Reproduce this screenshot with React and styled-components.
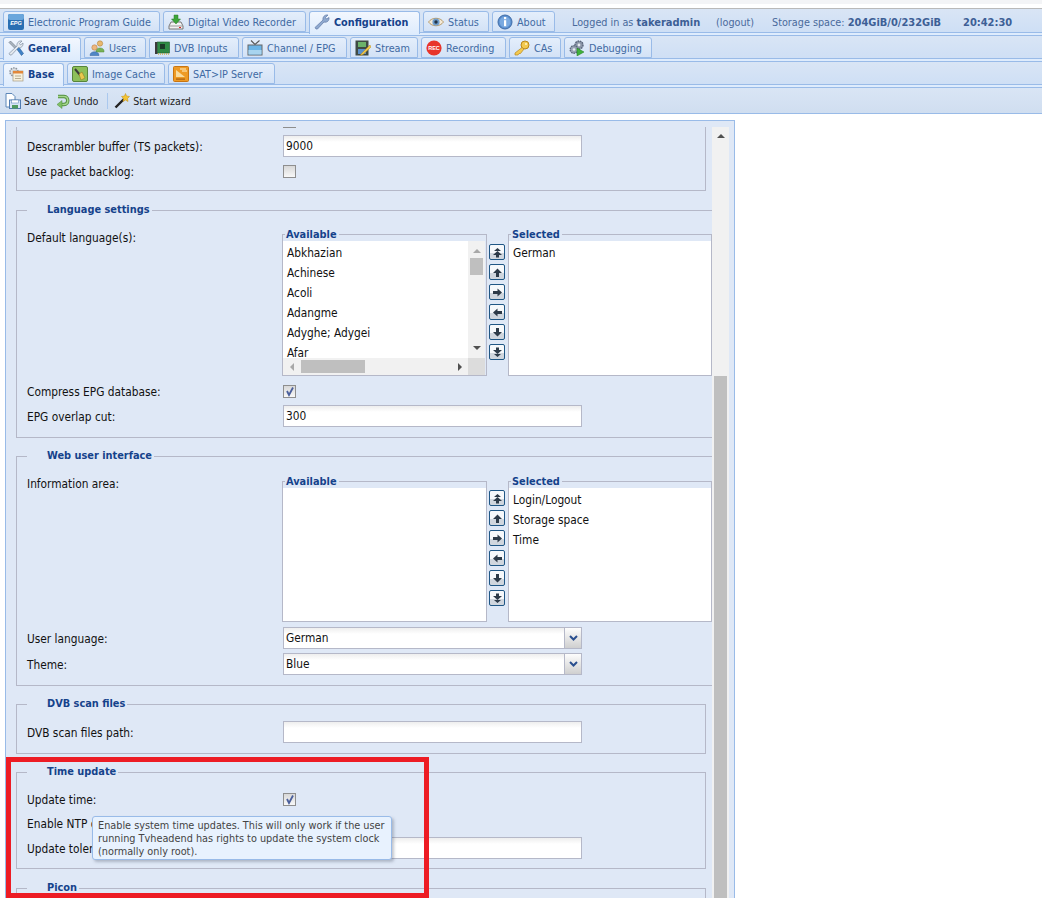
import React from 'react'
import styled, { createGlobalStyle } from 'styled-components'

const GlobalStyle = createGlobalStyle`
  html, body {
    margin: 0;
    padding: 0;
    background: #fff;
    height: 100%;
    overflow: hidden;
  }
  body {
    font-family: "DejaVu Sans Condensed", "DejaVu Sans", sans-serif;
    font-size: 12px;
    color: #111;
  }
`

const Page = styled.div`
  height: 898px;
  overflow: hidden;
  position: relative;
`

const BrowserEdge = styled.div`
  height: 8px;
  background: linear-gradient(#f3f4f6 0 4px, #fff 4px);
  border-bottom: 1px solid #b9b9b9;
`

// tab strips
const Strip = styled.div`
  height: 26px;
  box-sizing: border-box;
  background: linear-gradient(#d9e5f5, #cedff5 23px, #deecfd 0);
  border-top: ${({ $first }) => ($first ? 0 : 1)}px solid #99bbe8;
  display: flex;
  align-items: flex-start;
  padding: ${({ $first }) => ($first ? 2 : 1)}px 0 0 3px;
  gap: 3px;
  position: relative;

  &::after {
    content: '';
    position: absolute;
    left: 0;
    right: 0;
    bottom: 2px;
    height: 1px;
    background: #99bbe8;
  }
`

const Tab = styled.div`
  width: ${({ $w }) => $w}px;
  height: ${({ $active }) => ($active ? 23 : 21)}px;
  box-sizing: border-box;
  border: 1px solid #99bbe8;
  border-bottom: ${({ $active }) => ($active ? 0 : 1)}px solid #99bbe8;
  border-radius: 3px 3px 0 0;
  background: ${({ $active }) =>
    $active ? 'linear-gradient(#f2f7fe, #deecfd)' : 'linear-gradient(#e4eefb, #d3e2f6)'};
  color: ${({ $active }) => ($active ? '#15428b' : '#416aa3')};
  font-size: 10.75px;
  font-weight: ${({ $active }) => ($active ? 700 : 400)};
  display: flex;
  align-items: center;
  gap: 4px;
  padding: ${({ $active }) => ($active ? '0 0 2px 4px' : '1px 0 0 4px')};
  white-space: nowrap;
  position: relative;
  z-index: 1;
`

const Info = styled.div`
  display: flex;
  align-items: center;
  height: 21px;
  padding-top: 1px;
  box-sizing: border-box;
  margin-left: 14px;
  color: #4a6a9c;
  font-size: 10.75px;
  white-space: nowrap;
  position: relative;

  b {
    color: #3d5f96;
    font-size: 11px;
  }
`

const InfoItem = styled.span`
  width: ${({ $w }) => $w}px;
`

const Toolbar = styled.div`
  height: 27px;
  box-sizing: border-box;
  background: linear-gradient(#d9e5f5, #d0def0);
  border-top: 1px solid #99bbe8;
  border-bottom: 1px solid #99bbe8;
  display: flex;
  align-items: center;
  padding-left: 5px;
  font-size: 10.6px;
  color: #222;
`

const ToolButton = styled.span`
  display: flex;
  align-items: center;
  gap: ${({ $gap }) => $gap}px;
  margin-right: ${({ $after }) => $after}px;
`

const ToolSep = styled.span`
  width: 1px;
  height: 16px;
  background: #aac8ee;
  margin-right: 6px;
`

// settings panel
const Panel = styled.div`
  margin: 6px 0 0 5px;
  width: 730px;
  height: 790px;
  box-sizing: border-box;
  border: 1px solid #99bbe8;
  background: #dfe8f6;
  padding-top: 6px;
  display: flex;
`

const Viewport = styled.div`
  width: 706px;
  height: 780px;
  overflow: hidden;
  padding-left: 10px;
  box-sizing: border-box;
`

const Track = styled.div`
  width: 17px;
  height: 780px;
  background: #f1f1f1;
  display: flex;
  flex-direction: column;
  align-items: center;
  padding-top: 6px;
  box-sizing: border-box;
`

const TrackGap = styled.div`
  height: 237px;
  flex: none;
`

const TrackThumb = styled.div`
  width: 13px;
  flex: 1;
  background: #bfbfbf;
`

const Group = styled.fieldset`
  margin: 0 0 ${({ $gap = 11 }) => $gap}px;
  width: ${({ $wide }) => ($wide ? 730 : 690)}px;
  box-sizing: border-box;
  border: 1px solid #b5b8c8;
  border-top: ${({ $cut }) => ($cut ? 'none' : '1px solid #b5b8c8')};
  padding: ${({ $cut }) => ($cut ? 0 : 10)}px 0 ${({ $end = 6 }) => $end}px 10px;
  min-width: 0;
`

const GroupTitle = styled.legend`
  margin-left: 0;
  padding: 0 2px 0 20px;
  font-size: 10.9px;
  line-height: 14px;
  font-weight: 700;
  color: #15428b;
`

const Row = styled.div`
  display: flex;
  align-items: ${({ $top }) => ($top ? 'flex-start' : 'center')};
  min-height: ${({ $h = 22 }) => $h}px;
  margin-bottom: ${({ $after = 4 }) => $after}px;
  margin-top: ${({ $pull }) => ($pull ? `-${$pull}px` : 0)};
`

const Label = styled.label`
  width: 256px;
  flex: none;
  white-space: nowrap;
  font-size: 11.8px;
  padding-top: ${({ $top }) => ($top ? 4 : 1)}px;
`

const Input = styled.div`
  width: 299px;
  height: 22px;
  box-sizing: border-box;
  border: 1px solid #b5b8c8;
  background: linear-gradient(#eeeeee, #fff 6px);
  padding-left: 2px;
  line-height: 21px;
  font-size: 11.8px;
`

const Combo = styled(Input)`
  display: flex;
  justify-content: space-between;
`

const ComboTrigger = styled.span`
  width: 16px;
  height: 20px;
  border-left: 1px solid #b5b8c8;
  background: linear-gradient(#fdfdfd, #e6e6e6 50%, #cfcfcf);
  display: flex;
  align-items: center;
  justify-content: center;
`

const Check = styled.span`
  width: 13px;
  height: 13px;
  box-sizing: border-box;
  border: 1px solid #8e8e8e;
  background: linear-gradient(#d8d8d8, #f8f8f8);
  display: flex;
  align-items: center;
  justify-content: center;
`

const Multi = styled.div`
  display: flex;
  align-items: flex-start;
  margin-top: ${({ $nudge = 0 }) => $nudge}px;
  margin-bottom: ${({ $after = 0 }) => $after}px;
  margin-left: -1px;
`

const ListBox = styled.fieldset`
  margin: 0;
  padding: 0;
  width: ${({ $w }) => $w}px;
  height: ${({ $h }) => $h}px;
  box-sizing: border-box;
  border: 1px solid #b5b8c8;
  min-width: 0;
  position: relative;
`

const ListTitle = styled.legend`
  margin-left: 2px;
  padding: 0 2px 0 1px;
  font-size: 10.9px;
  line-height: 14px;
  font-weight: 700;
  color: #15428b;
  position: relative;
  top: 1px;
`

const ListBody = styled.div`
  background: #fff;
  height: ${({ $h }) => $h - 15}px;
  box-sizing: border-box;
  padding-top: 2px;
  margin-right: ${({ $scroll }) => ($scroll ? 1 : 0)}px;
  overflow: hidden;
  position: relative;
`

const ListItem = styled.div`
  height: 20px;
  line-height: 20px;
  padding-left: 4px;
  font-size: 11.8px;
  white-space: nowrap;
`

const VBar = styled.div`
  position: absolute;
  top: 0;
  right: 0;
  width: 17px;
  bottom: 17px;
  background: #f1f1f1;
  display: flex;
  flex-direction: column;
  align-items: center;
  justify-content: space-between;
  padding: 7px 0;
  box-sizing: border-box;
`

const VThumb = styled.span`
  position: absolute;
  left: 2px;
  top: 17px;
  width: 13px;
  height: 17px;
  background: #bfbfbf;
`

const HBar = styled.div`
  position: absolute;
  left: 0;
  right: 0;
  bottom: 0;
  height: 17px;
  background: #f1f1f1;
  display: flex;
  align-items: center;
  justify-content: space-between;
  padding: 0 22px 0 6px;
`

const HThumb = styled.span`
  position: absolute;
  left: 18px;
  top: 2px;
  width: 64px;
  height: 13px;
  background: #bfbfbf;
`

const Corner = styled.span`
  position: absolute;
  right: 0;
  bottom: 0;
  width: 17px;
  height: 17px;
  background: #dcdcdc;
`

const MoveColumn = styled.div`
  width: 16px;
  margin: ${({ $top }) => $top}px 3px 0 2px;
  display: flex;
  flex-direction: column;
  gap: 4px;
`

const MoveButton = styled.span`
  width: 16px;
  height: 16px;
  box-sizing: border-box;
  border: 1px solid #1f5685;
  border-radius: 2px;
  background: linear-gradient(#f6f8fb 55%, #d0d6de 55%);
  display: flex;
  align-items: center;
  justify-content: center;
`

const Tooltip = styled.div`
  position: absolute;
  left: 92px;
  top: 816px;
  width: 300px;
  height: 44px;
  box-sizing: border-box;
  padding: 2px 5px;
  border: 1px solid #99bbe8;
  border-radius: 3px;
  background: #e8f2fe;
  box-shadow: 2px 2px 3px rgba(80, 90, 110, 0.35);
  color: #444;
  font-size: 10.8px;
  line-height: 13px;
  white-space: nowrap;
  z-index: 3;
`

const Highlight = styled.div`
  position: absolute;
  left: 6px;
  top: 757px;
  width: 423px;
  height: 141px;
  box-sizing: border-box;
  border: 5px solid #ed1c24;
  z-index: 4;
`

// small icons, all 16x16
const Svg = ({ children, w = 16, h = 16 }) => (
  <svg width={w} height={h} viewBox={`0 0 ${w} ${h}`} style={{ flex: 'none' }}>
    {children}
  </svg>
)

const icons = {
  epg: (
    <Svg>
      <rect x="0" y="0" width="16" height="16" rx="2" fill="#2a6fb2" />
      <rect x="0" y="0" width="16" height="6" rx="2" fill="#6aa6dc" />
      <text x="8" y="10.5" fontSize="5.5" fontWeight="700" fontStyle="italic" fill="#fff" textAnchor="middle" fontFamily="Liberation Sans, sans-serif">EPG</text>
    </Svg>
  ),
  dvr: (
    <Svg>
      <path d="M3 8 L1 12 V15 H15 V12 L13 8 Z" fill="#f2f2f2" stroke="#777" />
      <path d="M1 12 H15" stroke="#999" />
      <rect x="11" y="13" width="2" height="1" fill="#d22" />
      <path d="M6 1 H10 V5 H12.5 L8 10 L3.5 5 H6 Z" fill="#3da53a" stroke="#2a7a28" strokeWidth="0.5" />
    </Svg>
  ),
  wrench: (
    <Svg>
      <path d="M2 15 L1 13.5 L9 6 C8.5 3 10.5 0.5 14 1 L11.5 3.5 L12.5 5 L15 3.5 C15.5 6.5 13 9 10 8 L3.5 15 Z" fill="#8fa9cf" stroke="#6079a6" strokeWidth="0.7" />
    </Svg>
  ),
  eye: (
    <Svg>
      <path d="M0.5 8 C4 3 12 3 15.5 8 C12 13 4 13 0.5 8 Z" fill="#f4ead8" stroke="#b59b6d" />
      <circle cx="8" cy="8" r="3.6" fill="#6c9ccc" />
      <circle cx="8" cy="8" r="1.7" fill="#234" />
    </Svg>
  ),
  info: (
    <Svg>
      <circle cx="8" cy="8" r="7" fill="#5c90cf" stroke="#3e6ba8" />
      <circle cx="8" cy="8" r="5.4" fill="#7aa9e0" />
      <rect x="7" y="3" width="2.2" height="2.2" fill="#fff" />
      <rect x="7" y="6.2" width="2.2" height="6" fill="#fff" />
    </Svg>
  ),
  tools: (
    <Svg>
      <path d="M1 2.5 L2.5 1 L9 7.5 L7.5 9 Z" fill="#aab4bf" stroke="#67727f" strokeWidth="0.6" />
      <path d="M8 8 L10 6 L15.5 13.5 L13.5 15.5 Z" fill="#3f82c8" stroke="#2a5f99" strokeWidth="0.6" />
      <path d="M2 15 L1 13.5 L9 6 C8.5 3 10.5 0.5 14 1 L11.5 3.5 L12.5 5 L15 3 C15.5 6 13 8.5 10.5 7.5 L3.5 15 Z" fill="#e3e8ee" stroke="#6f7f94" strokeWidth="0.6" />
    </Svg>
  ),
  users: (
    <Svg>
      <circle cx="11" cy="3.5" r="2.7" fill="#e9b86f" stroke="#a87a30" strokeWidth="0.5" />
      <path d="M7 11 C7 7 15 7 15 11 V12 H7 Z" fill="#79b257" stroke="#4d8a36" strokeWidth="0.5" />
      <circle cx="5.5" cy="7.5" r="2.7" fill="#edb77e" stroke="#b0763a" strokeWidth="0.5" />
      <path d="M1 15.5 C1 10.5 10 10.5 10 15.5 Z" fill="#4f86c6" stroke="#33639c" strokeWidth="0.5" />
    </Svg>
  ),
  card: (
    <Svg>
      <rect x="1" y="2" width="2.5" height="12" fill="#3b3b3b" />
      <rect x="3.5" y="2" width="12" height="11" fill="#2f8a45" stroke="#1c5a2c" strokeWidth="0.6" />
      <rect x="6" y="4" width="5" height="5" fill="#1c3a28" />
      <path d="M4 14 H15" stroke="#c8b050" strokeWidth="1.5" strokeDasharray="1 1" />
    </Svg>
  ),
  tv: (
    <Svg>
      <path d="M4 0.5 L8 4.5 L12.5 0.5" fill="none" stroke="#555" strokeWidth="1.1" />
      <rect x="0.5" y="4.5" width="15" height="11" fill="#666" />
      <rect x="1.5" y="5.5" width="13" height="9" fill="#6bb4e6" />
      <rect x="1.5" y="10" width="13" height="4.5" fill="#a8d4ef" />
    </Svg>
  ),
  stream: (
    <Svg>
      <rect x="0.5" y="0.5" width="13" height="15" fill="#3f4a44" />
      <rect x="3" y="2" width="8" height="5" fill="#6bb26a" />
      <rect x="3" y="9" width="8" height="5" fill="#5a8fc9" />
      <path d="M15 5 L7 13 L5 15.5 L8 14.5 L16 7 Z" fill="#f2c84a" stroke="#b68a20" strokeWidth="0.5" />
    </Svg>
  ),
  rec: (
    <Svg>
      <circle cx="8" cy="8" r="7.6" fill="#e8352b" />
      <text x="8" y="10" fontSize="5.5" fontWeight="700" fill="#fff" textAnchor="middle" fontFamily="Liberation Sans, sans-serif">REC</text>
    </Svg>
  ),
  key: (
    <Svg>
      <circle cx="11" cy="5" r="4" fill="#f3c94f" stroke="#b8871e" />
      <path d="M8 7.5 L1 13 V15 H4 L5 13.5 H6.5 L10 9 Z" fill="#f3c94f" stroke="#b8871e" strokeWidth="0.7" />
      <circle cx="12" cy="4" r="1" fill="#fff5c4" />
    </Svg>
  ),
  gears: (
    <Svg>
      <circle cx="10" cy="5" r="4" fill="#8b96a8" stroke="#59657a" strokeDasharray="1.6 0.8" strokeWidth="1.4" />
      <circle cx="10" cy="5" r="1.4" fill="#e8ecf2" />
      <circle cx="5" cy="9.5" r="3.8" fill="#9aa5b6" stroke="#5d697e" strokeDasharray="1.6 0.8" strokeWidth="1.4" />
      <circle cx="5" cy="9.5" r="1.3" fill="#e8ecf2" />
      <path d="M8 8 L15 12 L8 16 Z" fill="#3fb13a" stroke="#237a20" strokeWidth="0.5" />
    </Svg>
  ),
  base: (
    <Svg>
      <circle cx="6" cy="6" r="4" fill="#dfe2e6" stroke="#8a929c" strokeDasharray="1.5 1" strokeWidth="1.6" />
      <rect x="5" y="5" width="10" height="10" fill="#f7f0dc" stroke="#a59a80" strokeWidth="0.7" />
      <rect x="5" y="5" width="10" height="2.5" fill="#e2873a" />
      <path d="M7 10 H13 M7 12.5 H13" stroke="#b8ad92" />
    </Svg>
  ),
  broom: (
    <Svg>
      <rect x="0.5" y="0.5" width="15" height="15" rx="1.5" fill="#8dbf5a" stroke="#56853a" />
      <path d="M3 3 L8 9" stroke="#3c3c3c" strokeWidth="2" />
      <path d="M7 8 L10 6 L13 12 L9 14 Z" fill="#e8c84e" stroke="#8a6f1c" strokeWidth="0.5" />
    </Svg>
  ),
  dish: (
    <Svg>
      <rect x="0.5" y="0.5" width="15" height="15" rx="1" fill="#ee9a25" stroke="#c87512" />
      <path d="M3 4 L12 11 L3 11 Z" fill="#f8dca0" />
      <path d="M7 3 L13 3 M9 5 L14 5" stroke="#fff0c8" />
      <rect x="3" y="12.5" width="9" height="1.2" fill="#a85f10" />
    </Svg>
  ),
  save: (
    <Svg>
      <path d="M1 0.5 H7 L10 3.5 V14 H1 Z" fill="#fff" stroke="#5d87b8" />
      <rect x="4.5" y="7" width="11" height="8.5" fill="#d5e4f5" stroke="#4f7bb0" />
      <rect x="6.5" y="7" width="7" height="3" fill="#fff" stroke="#4f7bb0" strokeWidth="0.5" />
      <rect x="7" y="12" width="6" height="3.5" fill="#4f9a5e" />
    </Svg>
  ),
  undo: (
    <Svg w={14} h={16}>
      <path d="M2 3.5 H8 C13 3.5 13 11.5 8 11.5 H5" fill="none" stroke="#4f8c3c" strokeWidth="3.4" />
      <path d="M2 3.5 H8 C13 3.5 13 11.5 8 11.5 H5" fill="none" stroke="#a5d68b" strokeWidth="1.6" />
      <path d="M6 7.5 L1 11.5 L6 15.5 Z" fill="#7fbf64" stroke="#4f8c3c" strokeWidth="0.5" />
    </Svg>
  ),
  wand: (
    <Svg>
      <path d="M1.5 14.5 L10 6" stroke="#222" strokeWidth="2.4" />
      <path d="M11.5 0.5 L12.5 3 L15.5 3.5 L13.5 5.5 L14 8.5 L11.5 7 L9 8.5 L9.5 5.5 L7.5 3.5 L10.5 3 Z" fill="#f4c533" stroke="#c08a10" strokeWidth="0.5" />
    </Svg>
  ),
}

const Chevron = () => (
  <Svg w={9} h={7}>
    <path d="M1 1 L4.5 4.5 L8 1" fill="none" stroke="#2a4f8f" strokeWidth="2" />
  </Svg>
)

const CheckMark = () => (
  <Svg w={11} h={11}>
    <path d="M3 5 L5 9 L9 1.5" fill="none" stroke="#4a5f9c" strokeWidth="1.8" />
  </Svg>
)

const Tri = ({ dir, color = '#555' }) => {
  const d = {
    up: 'M0 5 L4 1 L8 5 Z',
    down: 'M0 1 L4 5 L8 1 Z',
    left: 'M5 0 L1 4 L5 8 Z',
    right: 'M1 0 L5 4 L1 8 Z',
  }[dir]
  const wide = dir === 'up' || dir === 'down'
  return (
    <Svg w={wide ? 8 : 6} h={wide ? 6 : 8}>
      <path d={d} fill={color} />
    </Svg>
  )
}

const moves = {
  top: 'M2 4 L5.5 1 L9 4 Z M1 8 L5.5 4 L10 8 H7 V10.5 H4 V8 Z',
  up: 'M1 6 L5.5 1.5 L10 6 H7 V10 H4 V6 Z',
  right: 'M5.5 1.5 L10 5.5 L5.5 9.5 V7 H1 V4 H5.5 Z',
  left: 'M5.5 1.5 L1 5.5 L5.5 9.5 V7 H10 V4 H5.5 Z',
  down: 'M1 5 L5.5 9.5 L10 5 H7 V1 H4 V5 Z',
  bottom: 'M4 0.5 H7 V3 H10 L5.5 7 L1 3 H4 Z M2 7 L5.5 10 L9 7 Z',
}

const MoveButtons = ({ top }) => (
  <MoveColumn $top={top}>
    {Object.keys(moves).map(k => (
      <MoveButton key={k}>
        <Svg w={11} h={11}>
          <path d={moves[k]} fill="#2d3a48" />
        </Svg>
      </MoveButton>
    ))}
  </MoveColumn>
)

const mainTabs = [
  { icon: 'epg', label: 'Electronic Program Guide', w: 157 },
  { icon: 'dvr', label: 'Digital Video Recorder', w: 143 },
  { icon: 'wrench', label: 'Configuration', w: 111, active: true },
  { icon: 'eye', label: 'Status', w: 66 },
  { icon: 'info', label: 'About', w: 63 },
]

const configTabs = [
  { icon: 'tools', label: 'General', w: 78, active: true },
  { icon: 'users', label: 'Users', w: 62 },
  { icon: 'card', label: 'DVB Inputs', w: 90 },
  { icon: 'tv', label: 'Channel / EPG', w: 105 },
  { icon: 'stream', label: 'Stream', w: 68 },
  { icon: 'rec', label: 'Recording', w: 85 },
  { icon: 'key', label: 'CAs', w: 52 },
  { icon: 'gears', label: 'Debugging', w: 88 },
]

const generalTabs = [
  { icon: 'base', label: 'Base', w: 61, active: true },
  { icon: 'broom', label: 'Image Cache', w: 98 },
  { icon: 'dish', label: 'SAT>IP Server', w: 107 },
]

const Tabs = ({ items }) =>
  items.map(t => (
    <Tab key={t.label} $w={t.w} $active={t.active}>
      {icons[t.icon]}
      {t.label}
    </Tab>
  ))

const languages = ['Abkhazian', 'Achinese', 'Acoli', 'Adangme', 'Adyghe; Adygei', 'Afar']

export default function App() {
  return (
    <Page>
      <GlobalStyle />
      <BrowserEdge />

      <Strip $first>
        <Tabs items={mainTabs} />
        <Info>
          <InfoItem $w={144}>Logged in as <b>takeradmin</b></InfoItem>
          <InfoItem $w={56}>(logout)</InfoItem>
          <InfoItem $w={191}>Storage space: <b>204GiB/0/232GiB</b></InfoItem>
          <InfoItem><b>20:42:30</b></InfoItem>
        </Info>
      </Strip>
      <Strip>
        <Tabs items={configTabs} />
      </Strip>
      <Strip>
        <Tabs items={generalTabs} />
      </Strip>

      <Toolbar>
        <ToolButton $gap={3} $after={9}>{icons.save}Save</ToolButton>
        <ToolButton $gap={3} $after={9}>{icons.undo}Undo</ToolButton>
        <ToolSep />
        <ToolButton $gap={3}>{icons.wand}Start wizard</ToolButton>
      </Toolbar>

      <Panel>
        <Viewport>
          <Group $cut $end={4} $gap={12}>
            <Row $h={20} $pull={16}>
              <Label />
              <Check />
            </Row>
            <Row>
              <Label>Descrambler buffer (TS packets):</Label>
              <Input>9000</Input>
            </Row>
            <Row $h={21}>
              <Label>Use packet backlog:</Label>
              <Check />
            </Row>
          </Group>

          <Group $wide>
            <GroupTitle>Language settings</GroupTitle>
            <Row $top>
              <Label $top>Default language(s):</Label>
              <Multi $after={1}>
                <ListBox $w={205} $h={149}>
                  <ListTitle>Available</ListTitle>
                  <ListBody $scroll $h={149}>
                    {languages.map(l => <ListItem key={l}>{l}</ListItem>)}
                    <VBar>
                      <Tri dir="up" color="#a8a8a8" />
                      <VThumb />
                      <Tri dir="down" color="#505050" />
                    </VBar>
                    <HBar>
                      <Tri dir="left" color="#a8a8a8" />
                      <HThumb />
                      <Tri dir="right" color="#505050" />
                    </HBar>
                    <Corner />
                  </ListBody>
                </ListBox>
                <MoveButtons top={17} />
                <ListBox $w={204} $h={149}>
                  <ListTitle>Selected</ListTitle>
                  <ListBody $h={149}>
                    <ListItem>German</ListItem>
                  </ListBody>
                </ListBox>
              </Multi>
            </Row>
            <Row $h={21} $after={3}>
              <Label>Compress EPG database:</Label>
              <Check><CheckMark /></Check>
            </Row>
            <Row>
              <Label>EPG overlap cut:</Label>
              <Input>300</Input>
            </Row>
          </Group>

          <Group $wide>
            <GroupTitle>Web user interface</GroupTitle>
            <Row $top>
              <Label $top>Information area:</Label>
              <Multi $nudge={1} $after={1}>
                <ListBox $w={205} $h={148}>
                  <ListTitle>Available</ListTitle>
                  <ListBody $h={148} />
                </ListBox>
                <MoveButtons top={16} />
                <ListBox $w={204} $h={148}>
                  <ListTitle>Selected</ListTitle>
                  <ListBody $h={148}>
                    <ListItem>Login/Logout</ListItem>
                    <ListItem>Storage space</ListItem>
                    <ListItem>Time</ListItem>
                  </ListBody>
                </ListBox>
              </Multi>
            </Row>
            <Row>
              <Label>User language:</Label>
              <Combo>German<ComboTrigger><Chevron /></ComboTrigger></Combo>
            </Row>
            <Row>
              <Label>Theme:</Label>
              <Combo>Blue<ComboTrigger><Chevron /></ComboTrigger></Combo>
            </Row>
          </Group>

          <Group>
            <GroupTitle>DVB scan files</GroupTitle>
            <Row>
              <Label>DVB scan files path:</Label>
              <Input />
            </Row>
          </Group>

          <Group $end={5} $gap={12}>
            <GroupTitle>Time update</GroupTitle>
            <Row $h={20}>
              <Label>Update time:</Label>
              <Check><CheckMark /></Check>
            </Row>
            <Row $h={20}>
              <Label>Enable NTP driver:</Label>
              <Check />
            </Row>
            <Row>
              <Label>Update tolerance (milliseconds):</Label>
              <Input />
            </Row>
          </Group>

          <Group>
            <GroupTitle>Picon</GroupTitle>
          </Group>
        </Viewport>
        <Track>
          <Tri dir="up" color="#505050" />
          <TrackGap />
          <TrackThumb />
        </Track>
      </Panel>

      <Tooltip>
        Enable system time updates. This will only work if the user<br />
        running Tvheadend has rights to update the system clock<br />
        (normally only root).
      </Tooltip>
      <Highlight />
    </Page>
  )
}
